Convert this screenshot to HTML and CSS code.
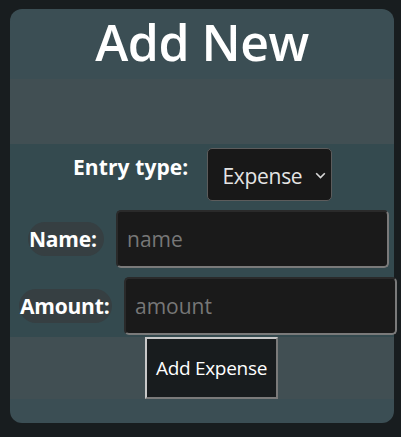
FILE: index.html
```html
<!DOCTYPE html>
<html>
<head>
<meta charset="utf-8">
<link rel="stylesheet" href="styles.css">
</head>
<body>
<div class="card">
  <h1 class="title">Add New</h1>
  <div class="spacer"></div>
  <form class="form">
    <div class="row row-type">
      <label class="type-label">Entry type:</label>
      <div class="select">
        <span class="select-text">Expense</span>
        <svg class="chev" width="11" height="7" viewBox="0 0 11 7"><path d="M1.2 1.2 L5.5 5.5 L9.8 1.2" fill="none" stroke="#d8d8d8" stroke-width="1.6"/></svg>
      </div>
    </div>
    <div class="row row-name">
      <label class="pill pill-name">Name:</label>
      <input class="field" type="text" placeholder="name">
    </div>
    <div class="row row-amount">
      <label class="pill pill-amount">Amount:</label>
      <input class="field" type="text" placeholder="amount">
    </div>
  </form>
  <div class="actions">
    <button class="btn" type="button">Add Expense</button>
  </div>
  <div class="foot"></div>
</div>
</body>
</html>
```
FILE: styles.css
```css
html, body {
  margin: 0;
  padding: 0;
  background: #181d1f;
  font-family: "Open Sans", "Noto Sans", sans-serif;
  color: #ffffff;
}
body {
  padding: 9px 7px 14px 10px;
  height: 437px;
  box-sizing: border-box;
}
.card {
  width: 384px;
  background: #3b4e54;
  border-radius: 12px;
  overflow: visible;
}
.title {
  margin: 0;
  height: 70px;
  font-size: 50px;
  font-weight: 600;
  text-align: center;
  line-height: 66px;
  letter-spacing: -0.5px;
}
.spacer {
  height: 65px;
  background: #414f53;
}
.form {
  margin: 0;
  background: #344a4f;
  height: 193px;
  display: flex;
  flex-direction: column;
}
.row {
  display: flex;
  align-items: center;
}
.row-type {
  padding-top: 4px;
  padding-left: 63px;
  align-items: flex-start;
  gap: 19px;
}
.type-label {
  font-weight: 700;
  font-size: 21px;
  line-height: 28px;
  padding-top: 5px;
  letter-spacing: 0.1px;
}
.select {
  width: 125px;
  height: 53px;
  box-sizing: border-box;
  background: #181818;
  border: 1px solid #5c5c5c;
  border-radius: 5px;
  display: flex;
  align-items: center;
  padding-left: 14px;
  padding-top: 2px;
  gap: 13px;
}
.select-text {
  font-size: 21px;
  color: #e4e4e4;
  letter-spacing: -0.3px;
}
.chev {
  flex-shrink: 0;
}
.pill {
  flex-shrink: 0;
  font-weight: 700;
  font-size: 21px;
  background: #363f42;
  border-radius: 17px;
  height: 34px;
  line-height: 34px;
  box-sizing: border-box;
  letter-spacing: -0.2px;
}
.pill-name {
  padding: 0 0 0 1px;
  width: 76px;
}
.pill-amount {
  padding: 0 0 0 1px;
  width: 93px;
}
.row-name {
  padding-top: 9px;
  padding-left: 18px;
  gap: 12px;
}
.row-amount {
  padding-top: 9px;
  padding-left: 9px;
  gap: 12px;
}
.field {
  flex-shrink: 0;
  width: 273px;
  height: 58px;
  box-sizing: border-box;
  background: #1a1a1a;
  border-width: 2px;
  border-style: solid;
  border-color: #2a2a2a #7a7a7a #7a7a7a #2a2a2a;
  border-radius: 5px;
  padding: 0 9px;
  font-family: "Open Sans", "Noto Sans", sans-serif;
  font-size: 21px;
  color: #e0e0e0;
  outline: none;
}
.field::placeholder {
  color: #777777;
}
.actions {
  height: 62px;
  background: #414f53;
  display: flex;
  justify-content: center;
  padding-left: 19px;
  box-sizing: border-box;
}
.btn {
  width: 133px;
  height: 62px;
  box-sizing: border-box;
  background: #181c1e;
  color: #ffffff;
  border: 2px solid;
  border-color: #c8c8c8 #7a7a7a #7a7a7a #c8c8c8;
  font-family: "Open Sans", "Noto Sans", sans-serif;
  font-size: 19px;
  letter-spacing: -0.3px;
  padding: 0;
}
.foot {
  height: 24px;
  border-radius: 0 0 12px 12px;
}
```
